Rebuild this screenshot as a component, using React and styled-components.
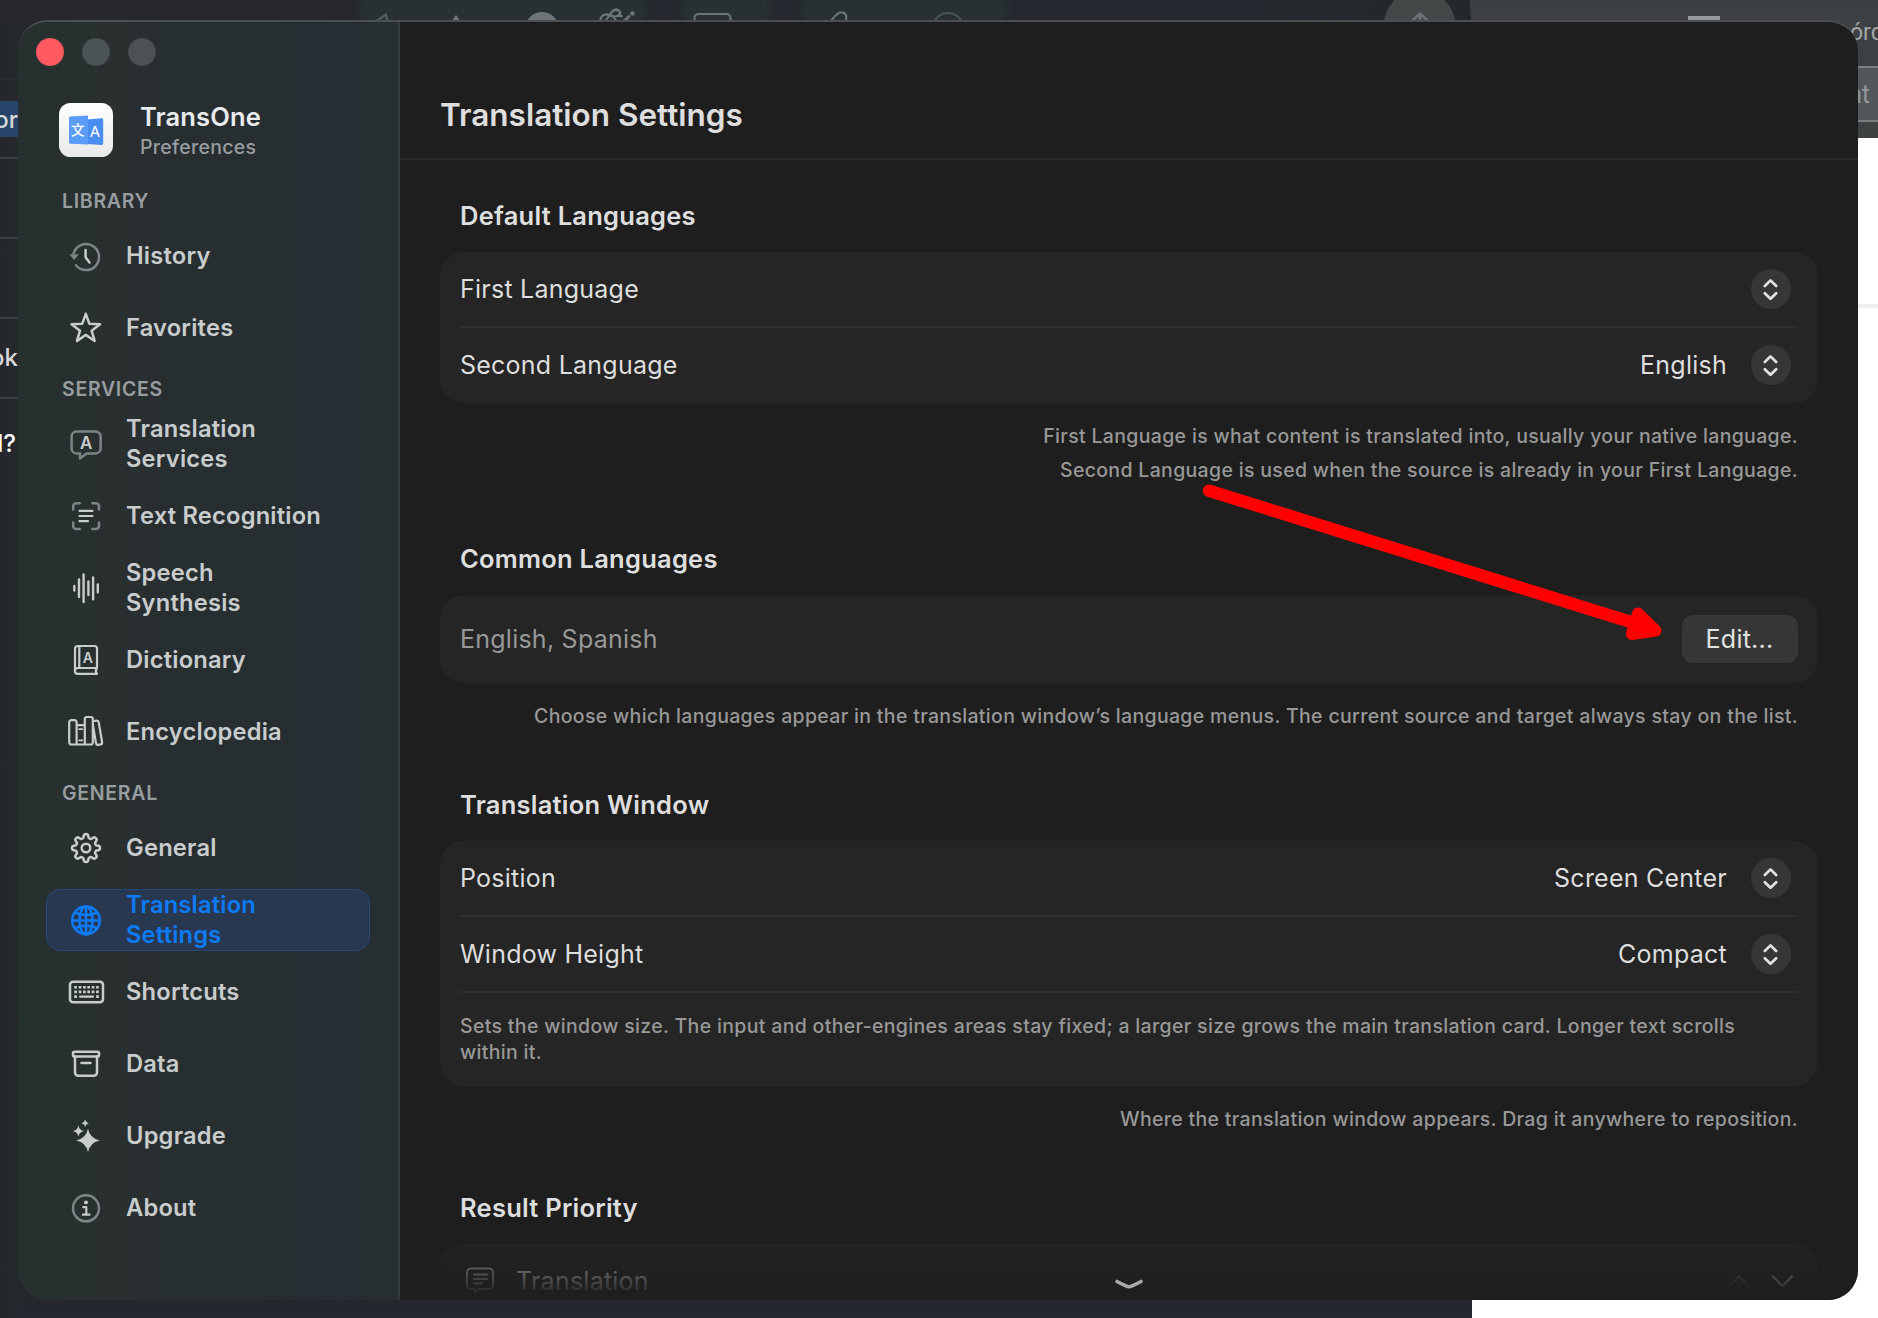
import React from "react";
import styled, { createGlobalStyle } from "styled-components";

const GlobalStyle = createGlobalStyle`
  * { box-sizing: border-box; }
  html, body { margin: 0; padding: 0; background: #25282d; }
  body { font-family: Inter, "Noto Sans CJK SC", sans-serif; -webkit-font-smoothing: antialiased; overflow: hidden; }
`;

/* ---------- desktop behind the window ---------- */

const Desktop = styled.div`
  position: relative;
  width: 1878px;
  height: 1318px;
  overflow: hidden;
  background: linear-gradient(90deg, #24272c 0%, #25292e 50%, #23282b 100%);
`;

const TopStrip = styled.div`
  display: flex;
  height: 22px;
  padding-left: 364px;
  background: linear-gradient(90deg, #27282b, #25282e 30%, #25292f 60%, #22282b);
`;

const TabBlob = styled.div`
  width: ${(p) => p.$w}px;
  margin-right: ${(p) => p.$gap}px;
  background: #283033;
  box-shadow: 0 0 10px 5px #283033;
`;

const StripArt = styled.svg`
  position: absolute;
  left: 0;
  top: 0;
`;

const Browser = styled.div`
  position: absolute;
  right: 0;
  top: 0;
  width: 408px;
  height: 1318px;
  display: flex;
  flex-direction: column;
`;

const BrowserChrome = styled.div`
  height: 138px;
  overflow: hidden;
  background: linear-gradient(#3b3f44, #3d4143 20px, #3b4043 60px, #3d4243);
  display: flex;
  flex-direction: column;
  align-items: flex-end;
  color: #a4a7a8;
  font-family: Roboto, sans-serif;
`;

const TabTitle = styled.div`
  width: 28px;
  height: 66px;
  padding-top: 18px;
  overflow: hidden;
  white-space: nowrap;
  font-size: 23px;
  line-height: 30px;
`;

const AddressField = styled.div`
  width: 28px;
  height: 56px;
  padding-right: 8px;
  border: solid #7b8183;
  border-width: 2px 0;
  background: #51575a;
  color: #94989a;
  display: flex;
  justify-content: flex-end;
  align-items: center;
  font-size: 25px;
`;

const BrowserPage = styled.div`
  flex: 1;
  background: #fff;
  padding-top: 166px;
  &::before {
    content: "";
    display: block;
    height: 4px;
    background: #efefef;
  }
`;

const DockBand = styled.div`
  position: absolute;
  left: 0;
  bottom: 0;
  width: 1472px;
  height: 22px;
  background: linear-gradient(#24272c, #24282f);
`;

const LeftStrip = styled.div`
  position: absolute;
  left: 0;
  top: 22px;
  width: 18px;
  height: 1296px;
  overflow: hidden;
  display: flex;
  flex-direction: column;
  background: linear-gradient(90deg, #24272c, #25292d);
`;

const StripRow = styled.div`
  height: ${(p) => p.$h}px;
  flex: none;
  display: flex;
  align-items: center;
  justify-content: flex-end;
  padding-right: ${(p) => p.$pad || 0}px;
  padding-bottom: ${(p) => p.$lift || 0}px;
  border-bottom: ${(p) => (p.$line ? `2px solid ${p.$faint ? "#2c2f32" : "#3d4043"}` : "none")};
  background: ${(p) => (p.$selected ? "#27456a" : "transparent")};
  color: ${(p) => (p.$bright ? "#fff" : "#d6d8da")};
  font-size: 24px;
  font-weight: 450;
  white-space: nowrap;
`;

/* ---------- window ---------- */

const Window = styled.div`
  position: absolute;
  left: 18px;
  top: 20px;
  width: 1840px;
  height: 1280px;
  display: flex;
  border-radius: 30px;
  border-top: 2px solid #4b4f51;
  overflow: hidden;
  background: #1e1e1e;
`;

const Sidebar = styled.aside`
  width: 382px;
  flex: none;
  display: flex;
  flex-direction: column;
  padding: 16px 28px 0;
  border-right: 2px solid #363a3c;
  background: linear-gradient(90deg, #26302f 0, #27302f 45px, #2a2f30 95px, #272e30 160px, #272e31 240px, #262d33 320px, #272f31 382px);
`;

const Lights = styled.div`
  display: flex;
  gap: 18px;
  margin-left: -10px;
`;

const Light = styled.span`
  width: 28px;
  height: 28px;
  border-radius: 50%;
  background: ${(p) => p.$color};
  box-shadow: inset 0 0 0 1px rgba(0, 0, 0, 0.08);
`;

const Brand = styled.div`
  display: flex;
  align-items: center;
  gap: 27px;
  height: 54px;
  margin: 37px 0 34px 13px;
`;

const BrandText = styled.div`
  display: flex;
  flex-direction: column;
  padding-top: 3px;
`;

const BrandName = styled.div`
  font-size: 25.5px;
  line-height: 31px;
  font-weight: 620;
  color: #e9ebec;
  letter-spacing: 0.15px;
`;

const BrandSub = styled.div`
  font-size: 19.5px;
  line-height: 30px;
  font-weight: 450;
  color: #989da0;
  letter-spacing: 0.3px;
`;

const GroupLabel = styled.div`
  font-size: 19.5px;
  line-height: 20px;
  font-weight: 620;
  color: #989da0;
  margin-left: 16px;
  letter-spacing: 0.7px;
`;

const Group = styled.div`
  display: flex;
  flex-direction: column;
  gap: 10px;
  margin: 14px 0 20px;
`;

const NavItem = styled.div`
  display: flex;
  align-items: center;
  gap: 22px;
  height: 62px;
  padding: 0 60px 0 21px;
  border-radius: 14px;
  border: 1.5px solid ${(p) => (p.$active ? "#28487a" : "transparent")};
  background: ${(p) => (p.$active ? "#283850" : "transparent")};
  color: ${(p) => (p.$active ? "#0c7bf8" : "#c8cccd")};
  font-size: 23.7px;
  line-height: 30px;
  font-weight: 570;
  letter-spacing: 0.2px;
`;

const NavIcon = styled.svg`
  flex: none;
  width: 36px;
  height: 36px;
  overflow: visible;
  fill: none;
  stroke: currentColor;
  stroke-width: 2.5;
  stroke-linecap: round;
  stroke-linejoin: round;
  .dim { stroke: #7d8486; }
  .solid { fill: currentColor; stroke: none; }
  .dimsolid { fill: #7d8486; stroke: none; }
  text { fill: currentColor; stroke: none; font-weight: 600; text-anchor: middle; letter-spacing: 0; }
`;

const Main = styled.main`
  position: relative;
  flex: 1;
  display: flex;
  flex-direction: column;
`;

const Header = styled.header`
  height: 138px;
  padding: 48px 40px 0;
  border-bottom: 2px solid #292929;
  display: flex;
  align-items: center;
  font-size: 31.5px;
  font-weight: 600;
  color: #dedede;
`;

const Body = styled.div`
  flex: 1;
  overflow: hidden;
  padding: 40px 40px 0;
`;

const Section = styled.section`
  margin-bottom: 56px;
`;

const Heading = styled.h2`
  margin: 0 20px 20px;
  font-size: 25.5px;
  line-height: 32px;
  font-weight: 630;
  letter-spacing: 0.25px;
  color: #dedede;
`;

const Card = styled.div`
  padding: 0 20px;
  border-radius: 24px;
  background: #252525;
`;

const Row = styled.div`
  display: flex;
  align-items: center;
  height: ${(p) => p.$h || 76}px;
  padding: ${(p) => p.$pad || "0 7px 1px 0"};
  border-bottom: ${(p) => (p.$line ? "2px solid #2e2e2e" : "none")};
  font-size: 25px;
  font-weight: 430;
  letter-spacing: 0.24px;
  color: ${(p) => (p.$muted ? "#989898" : "#dedede")};
`;

const RowLabel = styled.span`
  flex: 1;
`;

const RowValue = styled.span`
  margin-right: 24px;
`;

const StepperButton = styled.span`
  width: 40px;
  height: 40px;
  border-radius: 50%;
  background: #363636;
  display: grid;
  place-items: center;
`;

const EditButton = styled.button`
  width: 116px;
  height: 48px;
  border: 0;
  border-radius: 11px;
  background: #363636;
  color: #e2e2e2;
  font: inherit;
  letter-spacing: inherit;
  padding: 0 1px 0 0;
`;

const Note = styled.p`
  margin: 0;
  padding: 20px 0 21px;
  font-size: 19.5px;
  line-height: 26px;
  font-weight: 450;
  letter-spacing: 0.33px;
  color: #989898;
`;

const Caption = styled.p`
  margin: 16px 20px 0;
  text-align: right;
  font-size: 19.5px;
  line-height: 34px;
  font-weight: 450;
  letter-spacing: 0.325px;
  color: #989898;
`;

const PriorityLabel = styled.span`
  flex: 1;
  margin-left: 22px;
`;

const Fade = styled.div`
  position: absolute;
  left: 0;
  right: 0;
  bottom: 0;
  height: 80px;
  background: linear-gradient(rgba(30, 30, 30, 0), #1e1e1e 98%);
`;

const MoreHint = styled.svg`
  position: absolute;
  left: 714px;
  bottom: 9px;
`;

const Arrow = styled.svg`
  position: absolute;
  left: 1190px;
  top: 470px;
`;

/* ---------- icons ---------- */

const starPoints = (cx, cy, R, r) =>
  Array.from({ length: 10 }, (_, i) => {
    const a = -Math.PI / 2 + (i * Math.PI) / 5;
    const q = i % 2 ? r : R;
    return `${(cx + q * Math.cos(a)).toFixed(2)},${(cy + q * Math.sin(a)).toFixed(2)}`;
  }).join(" ");

const gearPath = () => {
  const pts = [];
  for (let i = 0; i < 96; i++) {
    const a = (i / 96) * Math.PI * 2;
    const w = Math.tanh(2.2 * Math.cos(8 * a)) / Math.tanh(2.2);
    const r = 12 + 1.9 * w;
    pts.push(`${(18 + r * Math.sin(a)).toFixed(2)} ${(18 - r * Math.cos(a)).toFixed(2)}`);
  }
  return `M${pts.join("L")}Z`;
};

const sparkle = (x, y, r) => {
  const k = r * 0.17;
  return `M${x} ${y - r}Q${x + k} ${y - k} ${x + r} ${y}Q${x + k} ${y + k} ${x} ${y + r}Q${x - k} ${y + k} ${x - r} ${y}Q${x - k} ${y - k} ${x} ${y - r}Z`;
};

const icons = {
  history: (
    <>
      <path className="dim" d="M5.6 15.5A13 13 0 1 1 8 27.3" />
      <path className="dimsolid" d="M1.3 16.2h9.6L6.1 22z" />
      <path d="M17.6 12v7.2l3.9 5.2" />
    </>
  ),
  star: <polygon points={starPoints(17.8, 18.8, 15, 6.1)} />,
  bubble: (
    <>
      <path className="dim" d="M8.6 5.4h19a5 5 0 0 1 5 5v12a5 5 0 0 1-5 5H18.5L12 32.4v-5H8.6a5 5 0 0 1-5-5v-12a5 5 0 0 1 5-5Z" />
      <text x="18.2" y="22.8" fontSize="17">A</text>
    </>
  ),
  scan: (
    <>
      <path className="dim" d="M5.2 11.5V8.2a3 3 0 0 1 3-3h3.6M24.4 5.2H28a3 3 0 0 1 3 3v3.3M31 24.6V28a3 3 0 0 1-3 3h-3.6M11.8 31H8.2a3 3 0 0 1-3-3v-3.4" />
      <path d="M11.5 12.8h13M11.5 18h13M11.5 23.2h8.5" strokeWidth="2.2" />
    </>
  ),
  wave: <path d="M6.3 16v4.6M11 9.5v17.6M15.6 4.5v27.6M20.4 11.5v13.6M25.1 7.4v21.8M29.8 14.4v7.8" strokeWidth="2.4" />,
  dictionary: (
    <>
      <path d="M10 4h16.5a2.5 2.5 0 0 1 2.5 2.5V26H9.8a2.9 2.9 0 0 0 0 5.8H29M29 26c-1.5 1.8-1.5 4 0 5.8M7 29V7a3 3 0 0 1 3-3M11.3 4v22" strokeWidth="2.2" />
      <text x="19.8" y="20.6" fontSize="14">A</text>
    </>
  ),
  books: (
    <>
      <path d="M1.2 8.4a2.2 2.2 0 0 1 2.2-2.2h3a2.2 2.2 0 0 1 2.2 2.2V30.5H3.4a2.2 2.2 0 0 1-2.2-2.2ZM8.6 11.2h8.2v19.3H8.6M16.8 30.5V5a2 2 0 0 1 2-2h4a2 2 0 0 1 2 2v23.5a2 2 0 0 1-2 2ZM24.8 7.4l3.6-.7a2 2 0 0 1 2.3 1.6l3.4 19.8a2 2 0 0 1-1.6 2.3l-2.2.4a2 2 0 0 1-2.3-1.6L24.8 10" strokeWidth="2.2" />
      <path d="M11.2 15.2h3M11.2 26.4h3" strokeWidth="1.7" />
    </>
  ),
  gear: (
    <>
      <path d={gearPath()} />
      <circle cx="18" cy="18" r="4.3" />
    </>
  ),
  globe: (
    <>
      <circle cx="18" cy="18.4" r="13.8" />
      <ellipse cx="18" cy="18.4" rx="6.6" ry="13.8" />
      <path d="M18 4.6v27.6M4.2 18.4h27.6M7.5 10.8c6.2 3 14.8 3 21 0M7.5 26c6.2-3 14.8-3 21 0" />
    </>
  ),
  keyboard: (
    <>
      <rect x="2" y="7.8" width="33" height="20.4" rx="3" />
      <path d="M7.5 13.3h.1M12 13.3h.1M16.4 13.3h.1M20.6 13.3h.1M25 13.3h.1M29.4 13.3h.1M7.5 17.9h.1M12 17.9h.1M16.4 17.9h.1M20.6 17.9h.1M25 17.9h.1M29.4 17.9h.1M7.5 22.6h.1M29.4 22.6h.1" strokeWidth="2.6" strokeLinecap="square" />
      <path d="M12 22.6h13" strokeWidth="2.2" />
    </>
  ),
  archive: (
    <>
      <rect x="5" y="5.8" width="26" height="4.8" rx="1.6" />
      <path d="M7 10.6v16a3.2 3.2 0 0 0 3.2 3.2h15.6a3.2 3.2 0 0 0 3.2-3.2v-16M13.5 17h9" />
    </>
  ),
  sparkles: (
    <g className="solid">
      <path d={sparkle(20, 22.4, 11.6)} />
      <path d={sparkle(10.4, 13, 5.6)} />
      <path d={sparkle(17.2, 5.2, 3.6)} />
    </g>
  ),
  info: (
    <>
      <circle className="dim" cx="18" cy="18.3" r="13" />
      <circle className="solid" cx="18" cy="12.4" r="1.9" />
      <path d="M15.3 17.2h3v7.2M14.9 24.7h6.6" strokeWidth="2.2" />
    </>
  ),
};

const AppIcon = () => (
  <svg width="54" height="54" viewBox="0 0 54 54">
    <defs>
      <linearGradient id="tile" x1="0" y1="0" x2="0" y2="1">
        <stop offset="0" stopColor="#ffffff" />
        <stop offset="1" stopColor="#e9e9ea" />
      </linearGradient>
    </defs>
    <rect width="54" height="54" rx="11.5" fill="url(#tile)" />
    <path d="M28 16.5 43 15.3q1.2 0 1.2 1.2V40.5q0 1.4-1.4 1.4L28 41z" fill="#4a8df0" />
    <path d="M11.5 13.4 29 12.6V41.4L11.5 40.8q-1.5 0-1.5-1.5V14.9q0-1.5 1.5-1.5z" fill="#5a9cf6" />
    <text x="18.8" y="32.4" fontSize="13.5" fontWeight="500" fill="#fff" textAnchor="middle" fontFamily="Noto Sans CJK SC, sans-serif">文</text>
    <text x="36" y="34.4" fontSize="15" fill="#fff" textAnchor="middle">A</text>
  </svg>
);

const Stepper = () => (
  <StepperButton>
    <svg width="40" height="40" viewBox="0 0 40 40" fill="none" stroke="#e2e2e2" strokeWidth="2.7" strokeLinecap="round" strokeLinejoin="round">
      <path d="M13.8 17 19.5 11.4 25.2 17M13.8 24.2 19.5 29.8 25.2 24.2" />
    </svg>
  </StepperButton>
);

/* ---------- content ---------- */

const groups = [
  { label: "LIBRARY", items: [["history", "History"], ["star", "Favorites"]] },
  {
    label: "SERVICES",
    items: [
      ["bubble", "Translation Services"],
      ["scan", "Text Recognition"],
      ["wave", "Speech Synthesis"],
      ["dictionary", "Dictionary"],
      ["books", "Encyclopedia"],
    ],
  },
  {
    label: "GENERAL",
    items: [
      ["gear", "General"],
      ["globe", "Translation Settings"],
      ["keyboard", "Shortcuts"],
      ["archive", "Data"],
      ["sparkles", "Upgrade"],
      ["info", "About"],
    ],
  },
];

const NavText = styled.span`
  width: ${(p) => (p.$wrap ? "150px" : "auto")};
  white-space: ${(p) => (p.$wrap ? "normal" : "nowrap")};
`;

const PickerRow = ({ label, value, line, h }) => (
  <Row $line={line} $h={h}>
    <RowLabel>{label}</RowLabel>
    <RowValue>{value}</RowValue>
    <Stepper />
  </Row>
);

export default function App() {
  return (
    <Desktop>
      <GlobalStyle />
      <TopStrip>
        <TabBlob $w={278} $gap={44} />
        <TabBlob $w={80} $gap={40} />
        <TabBlob $w={196} $gap={0} />
      </TopStrip>
      <Browser>
        <BrowserChrome>
          <TabTitle>órd</TabTitle>
          <AddressField>nt</AddressField>
        </BrowserChrome>
        <BrowserPage />
      </Browser>
      <StripArt width="1878" height="22" fill="none" stroke="#6c7476" strokeWidth="2.2" strokeLinecap="round" strokeLinejoin="round">
        <path d="M375 22 386 14.5l1.5 7.5" stroke="#555d60" />
        <path d="M452.5 22 456 16.5l3.5 5.5z" fill="#6c7476" />
        <circle cx="542" cy="29" r="17" fill="#6c7476" stroke="none" />
        <path d="M601 22c-2-6 4-9 9-7 4 1 5 4 6 6M606 20c3-3 7-13 12-10 6 3-2 9-9 5M616 10c6 1 5 6 1 6h5" />
        <path d="M624 21l5-4.5" strokeWidth="3" />
        <circle cx="632.5" cy="13.5" r="1.2" fill="#6c7476" />
        <path d="M694.5 24v-6a4 4 0 0 1 4-4h28a4 4 0 0 1 4 4v6" />
        <path d="M830 22c5-6 9-11 13-9.5s4 6 2 9.5" />
        <path d="M934 22c6-12 22-12 28 0" stroke="#4b5355" />
        <circle cx="1420" cy="18" r="51" fill="#22282b" stroke="none" />
        <circle cx="1419.5" cy="26" r="36" fill="#424748" stroke="none" />
        <path d="M1413 20l7-6.5 7 6.5M1420 14v8" stroke="#6c7274" strokeWidth="2.6" />
        <rect x="1688" y="16" width="32" height="6" fill="#98999a" stroke="none" />
      </StripArt>
      <DockBand />
      <LeftStrip>
        <StripRow $h={58} $line $faint />
        <StripRow $h={21} />
        <StripRow $h={36} $selected>or</StripRow>
        <StripRow $h={22} $line />
        <StripRow $h={80} $line />
        <StripRow $h={80} $line />
        <StripRow $h={80} $line $lift={1}>ok</StripRow>
        <StripRow $h={88} $bright $pad={2}>l?</StripRow>
      </LeftStrip>

      <Window>
        <Sidebar>
          <Lights>
            <Light $color="#ff5b60" />
            <Light $color="#4c5355" />
            <Light $color="#4c5253" />
          </Lights>
          <Brand>
            <AppIcon />
            <BrandText>
              <BrandName>TransOne</BrandName>
              <BrandSub>Preferences</BrandSub>
            </BrandText>
          </Brand>
          {groups.map((g) => (
            <React.Fragment key={g.label}>
              <GroupLabel>{g.label}</GroupLabel>
              <Group>
                {g.items.map(([icon, text]) => (
                  <NavItem key={text} $active={text === "Translation Settings"}>
                    <NavIcon viewBox="0 0 36 36">{icons[icon]}</NavIcon>
                    <NavText $wrap={/^(Translation|Speech)/.test(text)}>{text}</NavText>
                  </NavItem>
                ))}
              </Group>
            </React.Fragment>
          ))}
        </Sidebar>

        <Main>
          <Header>Translation Settings</Header>
          <Body>
            <Section>
              <Heading>Default Languages</Heading>
              <Card>
                <PickerRow label="First Language" value="" line h={76} />
                <PickerRow label="Second Language" value="English" h={75} />
              </Card>
              <Caption>
                First Language is what content is translated into, usually your native language.
                <br />
                Second Language is used when the source is already in your First Language.
              </Caption>
            </Section>

            <Section>
              <Heading>Common Languages</Heading>
              <Card>
                <Row $h={88} $muted $pad="0">
                  <RowLabel>English, Spanish</RowLabel>
                  <EditButton>Edit...</EditButton>
                </Row>
              </Card>
              <Caption>
                Choose which languages appear in the translation window’s language menus. The current source and target always stay on the list.
              </Caption>
            </Section>

            <Section>
              <Heading>Translation Window</Heading>
              <Card>
                <PickerRow label="Position" value="Screen Center" line h={76} />
                <PickerRow label="Window Height" value="Compact" line h={76} />
                <Note>
                  Sets the window size. The input and other-engines areas stay fixed; a larger size grows the main translation card. Longer text scrolls
                  <br />
                  within it.
                </Note>
              </Card>
              <Caption>Where the translation window appears. Drag it anywhere to reposition.</Caption>
            </Section>

            <Section>
              <Heading>Result Priority</Heading>
              <Card>
                <Row $h={73} $pad="0 3px 0 6px">
                  <svg width="28" height="28" viewBox="0 0 28 28" fill="none" stroke="#b4b4b4" strokeWidth="2" strokeLinecap="round" strokeLinejoin="round">
                    <path d="M5 1.5h18a4 4 0 0 1 4 4V18a4 4 0 0 1-4 4H13l-4.5 4V22H5a4 4 0 0 1-4-4V5.5a4 4 0 0 1 4-4ZM8 7.5h13M8 12h13M8 16.5h8" />
                  </svg>
                  <PriorityLabel>Translation</PriorityLabel>
                  <svg width="66" height="14" viewBox="0 0 66 14" fill="none" strokeWidth="2.2" strokeLinecap="round" strokeLinejoin="round">
                    <path d="M0.500 12 10 2.500 19.500 12" stroke="#555" />
                    <path d="M44 2.500 53.500 12 63 2.500" stroke="#b4b4b4" />
                  </svg>
                </Row>
              </Card>
            </Section>
          </Body>
          <Fade />
          <MoreHint width="30" height="14" viewBox="0 0 30 14" fill="none" stroke="#a9a9a9" strokeWidth="3.6" strokeLinecap="round" strokeLinejoin="round">
            <path d="M3 4.5Q13 9.8 15 9.8T27 4.5" />
          </MoreHint>
        </Main>
      </Window>

      <Arrow width="500" height="190" viewBox="0 0 500 190" fill="#ff0000" stroke="#ff0000" strokeLinecap="round" strokeLinejoin="round">
        <path d="M19 20.7 444 153" fill="none" strokeWidth="12.5" />
        <path d="M448 143.5 465.5 160.5 442 164z" strokeWidth="12" />
      </Arrow>
    </Desktop>
  );
}
